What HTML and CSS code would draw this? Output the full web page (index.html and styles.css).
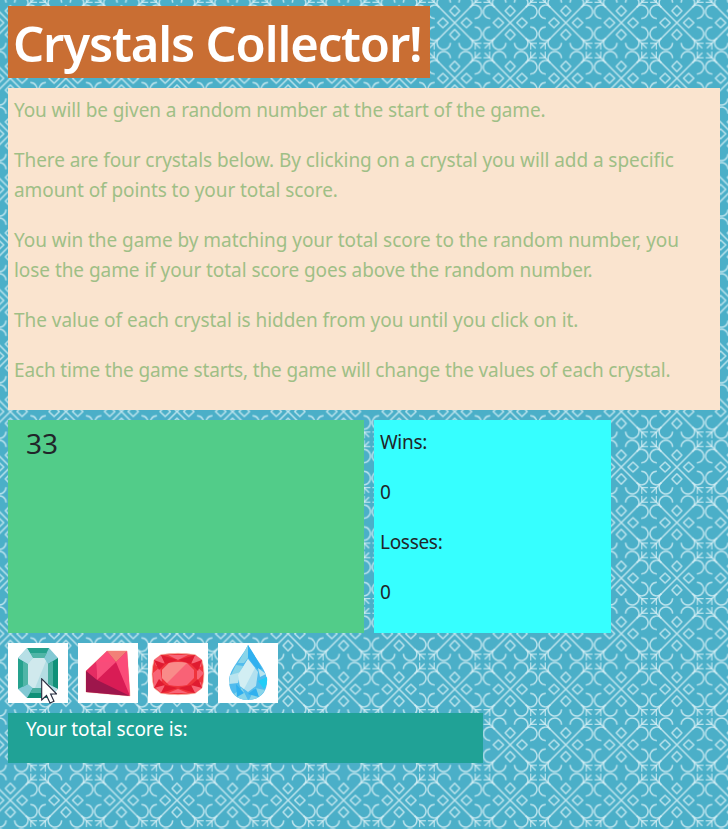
FILE: index.html
```html
<!DOCTYPE html>
<html lang="en">
<head>
<meta charset="utf-8">
<title>Crystals Collector!</title>
<link rel="stylesheet" href="styles.css">
</head>
<body>
<svg class="backdrop" aria-hidden="true">
  <defs>
    <pattern id="lattice" x="-17.4" y="-5" width="55.54" height="55.54" patternUnits="userSpaceOnUse">
      <g transform="translate(27.77 27.77)" fill="none" stroke="#dcf2f7" stroke-opacity=".78" stroke-width="1.45">
        <path d="M-25.5-25.5 25.5 25.5M25.5-25.5-25.5 25.5"/>
        <g id="arm">
          <path d="M15.3-15.7A6.7 6.7 0 1 1 20-4.3M15.7-15.3A6.7 6.7 0 1 0 4.3-20"/>
          <path d="M0-17 5-11.8 0-6.6-5-11.8Z" stroke-linejoin="round"/>
          <path d="M20.5-26.7V-20.5H26.7" stroke-width="1.2"/>
        </g>
        <use href="#arm" transform="rotate(90)"/>
        <use href="#arm" transform="rotate(180)"/>
        <use href="#arm" transform="rotate(270)"/>
      </g>
    </pattern>
  </defs>
  <rect width="100%" height="100%" fill="url(#lattice)"/>
</svg>
<main class="game">
  <h1 class="title">Crystals Collector!</h1>
  <section class="rules">
    <p class="r1">You will be given a random number at the start of the game.</p>
    <p class="r2">There are four crystals below. By clicking on a crystal you will add a specific<br>amount of points to your total score.</p>
    <p class="r3">You win the game by matching your total score to the random number, you<br>lose the game if your total score goes above the random number.</p>
    <p class="r4">The value of each crystal is hidden from you until you click on it.</p>
    <p class="r5">Each time the game starts, the game will change the values of each crystal.</p>
  </section>
  <div class="board">
    <div class="target">33</div>
    <div class="record"><p>Wins:</p><p>0</p><p>Losses:</p><p>0</p></div>
  </div>
  <div class="crystals">
    <button class="crystal" aria-label="Green crystal">
      <svg viewBox="0 0 60 60">
        <path fill="#82c9d4" d="M19 5H41L50 15V46L41 55H19L10 46V15Z"/>
        <path fill="#25a18d" d="M19 5H41L36 15H25ZM10 15 20 21V41L10 46Z"/>
        <path fill="#109078" d="M50 15 40 21V41L50 46ZM19 55 25 45H36L41 55Z"/>
        <path fill="#50b5a7" d="M15 18 20 21V41L15 44ZM22 10H39L36 15H25Z"/>
        <path fill="#4aafa1" d="M40 21 45 18V44L40 41ZM25 45H36L38 50H22Z"/>
        <path fill="#b7dfe6" d="M19 5 25 15 20 21 10 15ZM50 46 40 41 36 45 41 55Z"/>
        <path fill="#b4dde3" d="M25 15H36L40 21V41L36 45H25L20 41V21Z"/>
        <path fill="#d0e9ed" d="M25 15H36L38 18 27 45H25L20 41V21Z"/>
      </svg>
      <svg class="cursor" viewBox="0 0 16 26"><path d="M.7.8V22L5.5 17.5 9 25 13 23.3 9.6 16H15.7Z" fill="#fff" stroke="#26283b" stroke-width="1.1"/></svg>
    </button>
    <button class="crystal" aria-label="Pink crystal">
      <svg viewBox="0 0 60 60">
        <path fill="#d91c55" stroke="#f5b49a" stroke-width=".6" d="M29 8H49L52 53 8 49V28Z"/>
        <path fill="#fb4b79" d="M29 8 38 19 49 8 52 53 38 19H18Z"/>
        <path fill="#f28077" d="M29 8H49L38 19Z"/>
        <path fill="#f84c7a" d="M18 19H38L19 37Z"/>
        <path fill="#e52c63" d="M8 28 18 19 19 37Z"/>
        <path fill="#9e164c" d="M8 28 19 37 52 53 8 49Z"/>
      </svg>
    </button>
    <button class="crystal" aria-label="Red crystal">
      <svg viewBox="0 0 60 60">
        <path fill="#ef343c" stroke="#f8c9b1" stroke-width=".7" d="M13 11.5Q30 9 47 11.5L54 17Q58 31 54 45L47 50.5Q30 53 13 50.5L6 45Q2 31 6 17Z"/>
        <path fill="#f86576" d="M13 12 17 20 8 23 6 17ZM47 12 54 17 53 24 43 20ZM5 30 12 24 14 38 6 45ZM47 50 43 43 53 39 54 45ZM20 12H40L30 17ZM17 43 13 50 7 44 11 39ZM20 50H40L30 46ZM56 30 49 24V38Z"/>
        <path fill="#e01b30" d="M13 12 30 17 17 21ZM47 12 30 17 43 21ZM6 17 17 21 11 27ZM54 17 43 21 50 28ZM13 50 30 45 17 42ZM47 50 30 45 43 42ZM6 45 17 42 11 36ZM54 45 43 42 50 36Z"/>
        <path fill="#f96276" d="M21 20Q30 18 39 20L46 27V35L39 42Q30 44 21 42L14 35V27Z"/>
        <path fill="#f98b89" d="M21 20Q30 18 39 20L19 40 14 35V27Z"/>
      </svg>
    </button>
    <button class="crystal" aria-label="Blue crystal">
      <svg viewBox="0 0 60 60">
        <path fill="#51bced" d="M30 2C25 13 11 26 11 38C11 50 19 57 30 57S49 50 49 38C49 26 35 13 30 2Z"/>
        <path fill="#88d4e9" d="M30 2 20 20 26 20 30 15 35 20ZM18 22 25 23 22 30 13 32ZM16 51 24 45 30 57Q21 57 16 51ZM37 45 47 47Q41 57 31 57Z"/>
        <path fill="#30b0ef" d="M30 2V15L39 26 44 26Q38 14 30 2ZM18 41 26 50 19 54ZM30 51 41 54 38 45Z"/>
        <path fill="#b8e4ef" d="M12 32 23 29 20 40 11 41ZM40 25 48 31 42 34Z"/>
        <path fill="#22cdf7" d="M49 34 40 38 46 46Q50 41 49 34Z"/>
        <path fill="#b2e0ef" d="M30 16 40 29 38 43 30 49 22 43 20 32Z"/>
        <path fill="#d2eef3" d="M30 16 37 25 26 46 22 43 20 32Z"/>
      </svg>
    </button>
  </div>
  <div class="total">Your total score is:</div>
</main>
</body>
</html>
```
FILE: styles.css
```css
* { box-sizing: border-box; }
body {
  margin: 0;
  min-height: 829px;
  background: #4bafc8;
  font: 19px/30px "Noto Sans", "Open Sans", sans-serif;
  color: #212529;
}
.backdrop { position: absolute; inset: 0; width: 100%; height: 829px; z-index: -1; }
.game { display: flex; flex-direction: column; align-items: flex-start; gap: 10px; padding: 6px 8px 0; height: 829px; overflow: hidden; }
.title { margin: 0; width: 422px; height: 72px; padding: 5px 0 0 5px; background: #c96e33; color: #fff; font-size: 49px; line-height: 64px; font-weight: 600; letter-spacing: -1.15px; white-space: nowrap; }
.rules { width: 712px; height: 322px; padding: 7px 6px 0; background: #fae4cf; color: #9fbf86; white-space: nowrap; }
.rules p { margin: 0 0 20px; }
.rules .r1 { letter-spacing: -.1px; }
.rules .r2 { letter-spacing: -.075px; }
.rules .r3 { letter-spacing: -.055px; }
.rules .r4 { letter-spacing: -.045px; }
.rules .r5 { letter-spacing: -.145px; }
.board { display: flex; gap: 10px; }
.target { width: 356px; height: 213px; padding: 2px 18px; background: #52cc89; font-size: 28px; line-height: 42px; }
.record { width: 237px; height: 213px; padding: 7px 6px; background: #36ffff; letter-spacing: -.3px; }
.record p { margin: 0 0 20px; }
.crystals { display: flex; gap: 10px; }
.crystal { position: relative; display: block; width: 60px; height: 60px; padding: 0; border: 0; background: #fff; }
.crystal svg { display: block; }
.crystal .cursor { position: absolute; left: 33px; top: 35px; width: 16px; height: 26px; }
.total { width: 475px; height: 50px; padding: 1px 18px; background: #20a296; color: #fff; letter-spacing: -.1px; }
```
